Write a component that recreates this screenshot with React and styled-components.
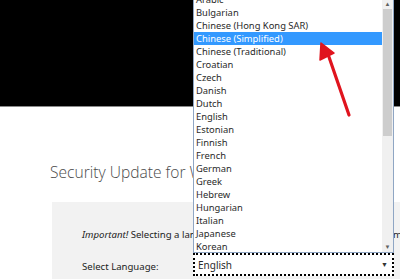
import styled, { createGlobalStyle } from "styled-components";

const languages = [
  "Arabic",
  "Bulgarian",
  "Chinese (Hong Kong SAR)",
  "Chinese (Simplified)",
  "Chinese (Traditional)",
  "Croatian",
  "Czech",
  "Danish",
  "Dutch",
  "English",
  "Estonian",
  "Finnish",
  "French",
  "German",
  "Greek",
  "Hebrew",
  "Hungarian",
  "Italian",
  "Japanese",
  "Korean",
];

export default function App() {
  return (
    <StyledPage>
      <GlobalStyle />
      <StyledHeader />
      <StyledMain>
        <StyledTitle>Security Update for Windows 8.1</StyledTitle>
        <StyledPanel>
          <StyledNote>
            <em>Important!</em> Selecting a language below will dynamically change the complete page content to that language.
          </StyledNote>
          <StyledFieldRow>
            <StyledLabel>Select Language:</StyledLabel>
          </StyledFieldRow>
        </StyledPanel>
      </StyledMain>

      <StyledDropdown>
        <StyledListbox>
          <StyledOptions>
            {languages.map((name) => (
              <StyledOption key={name} $selected={name === "Chinese (Simplified)"}>
                {name}
              </StyledOption>
            ))}
          </StyledOptions>
          <StyledScrollbar>
            <StyledScrollArrow>▲</StyledScrollArrow>
            <StyledThumb />
            <StyledTrack />
            <StyledScrollArrow>▼</StyledScrollArrow>
          </StyledScrollbar>
        </StyledListbox>
        <StyledSelect>
          <span>English</span>
          <StyledCaret>▼</StyledCaret>
        </StyledSelect>
      </StyledDropdown>

      <StyledPointer viewBox="0 0 40 80" width="40" height="80">
        <path d="M9 15 L29 73" stroke="#e0141e" strokeWidth="3.2" strokeLinecap="round" />
        <path d="M1 1 L0 18 L14 11 Z" fill="#e0141e" stroke="#e0141e" strokeWidth="1.5" strokeLinejoin="round" />
      </StyledPointer>
    </StyledPage>
  );
}

const GlobalStyle = createGlobalStyle`
  html, body {
    margin: 0;
    background: #ffffff;
    font-family: "Noto Sans", "Open Sans", sans-serif;
  }
`;

const StyledPage = styled.div`
  position: relative;
  width: 400px;
  height: 279px;
  overflow: hidden;
  background: #ffffff;
`;

const StyledHeader = styled.div`
  height: 106px;
  background: #000000;
  border-bottom: 1px solid #8a8a8a;
`;

const StyledMain = styled.div`
  display: flex;
  flex-direction: column;
  padding: 53px 0 0 50px;
`;

const StyledTitle = styled.h1`
  margin: 0;
  font-family: "Open Sans", sans-serif;
  font-weight: 300;
  font-size: 15.6px;
  line-height: 24px;
  color: #4a4a4a;
  white-space: nowrap;
`;

const StyledPanel = styled.div`
  margin: 18px 0 0 2px;
  padding: 26px 0 0 30px;
  background: #f2f2f2;
  height: 100px;
`;

const StyledNote = styled.p`
  margin: 0;
  font-size: 9.6px;
  line-height: 14px;
  color: #222;
  white-space: nowrap;
`;

const StyledFieldRow = styled.div`
  display: flex;
  margin-top: 18px;
`;

const StyledLabel = styled.span`
  font-size: 9.6px;
  line-height: 14px;
  color: #222;
`;

const StyledDropdown = styled.div`
  position: absolute;
  left: 193px;
  top: 0;
  width: 201px;
  display: flex;
  flex-direction: column;
  font-family: "Noto Sans", sans-serif;
  font-size: 9.4px;
  color: #2a2a2a;
`;

const StyledListbox = styled.div`
  display: flex;
  height: 253px;
  background: #ffffff;
  border: 1px solid #8fa6c4;
  border-top: none;
  box-sizing: border-box;
  overflow: hidden;
`;

const StyledOptions = styled.div`
  flex: 1;
  margin-top: -7px;
`;

const StyledOption = styled.div`
  height: 13px;
  line-height: 13px;
  padding-left: 2px;
  white-space: nowrap;
  background: ${(p) => (p.$selected ? "#3399ff" : "transparent")};
  color: ${(p) => (p.$selected ? "#ffffff" : "inherit")};
`;

const StyledScrollbar = styled.div`
  width: 11px;
  display: flex;
  flex-direction: column;
  background: #f0f0f0;
`;

const StyledScrollArrow = styled.div`
  height: 9px;
  font-size: 6px;
  line-height: 9px;
  text-align: center;
  color: #606060;
`;

const StyledThumb = styled.div`
  height: 127px;
  margin: 0 1px;
  background: #cdcdcd;
`;

const StyledTrack = styled.div`
  flex: 1;
`;

const StyledSelect = styled.div`
  display: flex;
  align-items: center;
  justify-content: space-between;
  height: 23px;
  padding: 0 4px 0 3px;
  border: 2px dotted #000;
  box-sizing: border-box;
  background: #ffffff;
  font-size: 10px;
`;

const StyledCaret = styled.span`
  font-size: 7px;
  color: #333;
`;

const StyledPointer = styled.svg`
  position: absolute;
  left: 320px;
  top: 42px;
  overflow: visible;
`;
